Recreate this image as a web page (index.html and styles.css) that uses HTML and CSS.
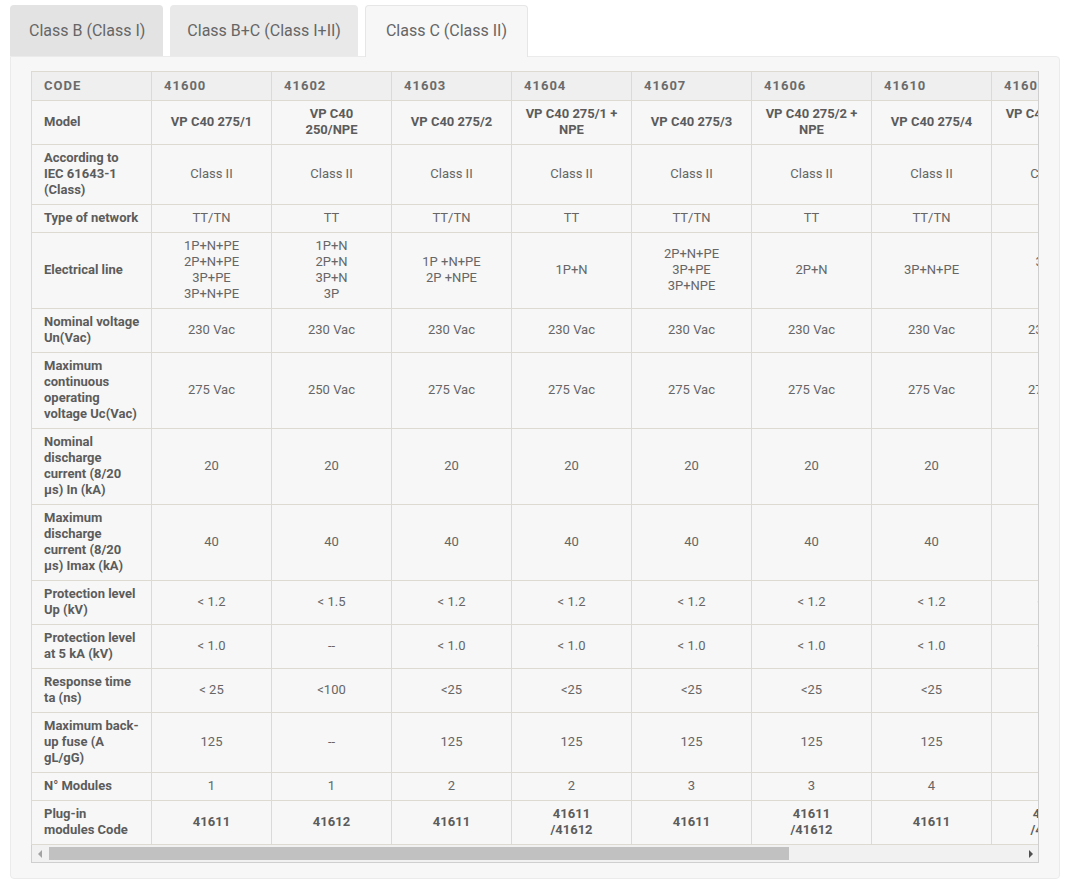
FILE: index.html
```html
<!DOCTYPE html>
<html>
<head>
<meta charset="utf-8">
<link rel="stylesheet" href="styles.css">
</head>
<body>
<div class="page">
  <div class="tabs">
    <div class="tab tab-first">Class B (Class I)</div>
    <div class="tab tab-second">Class B+C (Class I+II)</div>
    <div class="tab tab-active">Class C (Class II)</div>
  </div>
  <div class="panel">
    <div class="scroll">
      <div class="viewport">
        <table class="spec">
          <colgroup>
            <col><col><col><col><col><col><col><col><col><col><col>
          </colgroup>
          <tr class="head">
            <td>CODE</td><td>41600</td><td>41602</td><td>41603</td><td>41604</td><td>41607</td><td>41606</td><td>41610</td><td>41609</td><td>41608</td><td>41605</td>
          </tr>
          <tr class="bold">
            <th>Model</th><td>VP C40 275/1</td><td>VP C40<br>250/NPE</td><td>VP C40 275/2</td><td>VP C40 275/1 +<br>NPE</td><td>VP C40 275/3</td><td>VP C40 275/2 +<br>NPE</td><td>VP C40 275/4</td><td>VP C40 275/3 +<br>NPE</td><td>VP C40 275/4 +<br>NPE</td><td>VP C40 320/4</td>
          </tr>
          <tr>
            <th>According to<br>IEC 61643-1<br>(Class)</th><td>Class II</td><td>Class II</td><td>Class II</td><td>Class II</td><td>Class II</td><td>Class II</td><td>Class II</td><td>Class II</td><td>Class II</td><td>Class II</td>
          </tr>
          <tr>
            <th>Type of network</th><td>TT/TN</td><td>TT</td><td>TT/TN</td><td>TT</td><td>TT/TN</td><td>TT</td><td>TT/TN</td><td>TT</td><td>TT</td><td>TT/TN</td>
          </tr>
          <tr>
            <th>Electrical line</th><td>1P+N+PE<br>2P+N+PE<br>3P+PE<br>3P+N+PE</td><td>1P+N<br>2P+N<br>3P+N<br>3P</td><td>1P +N+PE<br>2P +NPE</td><td>1P+N</td><td>2P+N+PE<br>3P+PE<br>3P+NPE</td><td>2P+N</td><td>3P+N+PE</td><td>3P+N<br>3P</td><td>3P+N</td><td>3P+N+PE</td>
          </tr>
          <tr>
            <th>Nominal voltage Un(Vac)</th><td>230 Vac</td><td>230 Vac</td><td>230 Vac</td><td>230 Vac</td><td>230 Vac</td><td>230 Vac</td><td>230 Vac</td><td>230 Vac</td><td>230 Vac</td><td>230 Vac</td>
          </tr>
          <tr>
            <th>Maximum continuous operating voltage Uc(Vac)</th><td>275 Vac</td><td>250 Vac</td><td>275 Vac</td><td>275 Vac</td><td>275 Vac</td><td>275 Vac</td><td>275 Vac</td><td>275 Vac</td><td>275 Vac</td><td>320 Vac</td>
          </tr>
          <tr>
            <th>Nominal discharge current (8/20 μs) In (kA)</th><td>20</td><td>20</td><td>20</td><td>20</td><td>20</td><td>20</td><td>20</td><td>20</td><td>20</td><td>20</td>
          </tr>
          <tr>
            <th>Maximum discharge current (8/20 μs) Imax (kA)</th><td>40</td><td>40</td><td>40</td><td>40</td><td>40</td><td>40</td><td>40</td><td>40</td><td>40</td><td>40</td>
          </tr>
          <tr>
            <th>Protection level Up (kV)</th><td>&lt; 1.2</td><td>&lt; 1.5</td><td>&lt; 1.2</td><td>&lt; 1.2</td><td>&lt; 1.2</td><td>&lt; 1.2</td><td>&lt; 1.2</td><td>&lt; 1.2</td><td>&lt; 1.2</td><td>&lt; 1.4</td>
          </tr>
          <tr>
            <th>Protection level at 5 kA (kV)</th><td>&lt; 1.0</td><td>--</td><td>&lt; 1.0</td><td>&lt; 1.0</td><td>&lt; 1.0</td><td>&lt; 1.0</td><td>&lt; 1.0</td><td>&lt; 1.0</td><td>&lt; 1.0</td><td>&lt; 1.2</td>
          </tr>
          <tr>
            <th>Response time ta (ns)</th><td>&lt; 25</td><td>&lt;100</td><td>&lt;25</td><td>&lt;25</td><td>&lt;25</td><td>&lt;25</td><td>&lt;25</td><td>&lt;25</td><td>&lt;25</td><td>&lt;25</td>
          </tr>
          <tr>
            <th>Maximum back-up fuse (A gL/gG)</th><td>125</td><td>--</td><td>125</td><td>125</td><td>125</td><td>125</td><td>125</td><td>125</td><td>125</td><td>125</td>
          </tr>
          <tr>
            <th>N° Modules</th><td>1</td><td>1</td><td>2</td><td>2</td><td>3</td><td>3</td><td>4</td><td>4</td><td>4</td><td>4</td>
          </tr>
          <tr class="bold">
            <th>Plug-in<br>modules Code</th><td>41611</td><td>41612</td><td>41611</td><td>41611<br>/41612</td><td>41611</td><td>41611<br>/41612</td><td>41611</td><td>41611<br>/41612</td><td>41611<br>/41612</td><td>41613</td>
          </tr>
        </table>
      </div>
      <div class="scrollbar">
        <div class="sb-btn"><span class="tri tri-left"></span></div>
        <div class="sb-track"><div class="sb-thumb"></div></div>
        <div class="sb-btn"><span class="tri tri-right"></span></div>
      </div>
    </div>
  </div>
</div>
</body>
</html>
```

FILE: styles.css
```css
html, body {
  margin: 0;
  padding: 0;
  background: #ffffff;
}

body {
  font-family: Roboto, "Liberation Sans", Arial, sans-serif;
  color: #666666;
}

.page {
  padding: 5px 0 0 10px;
  width: 1050px;
}

.tabs {
  display: flex;
  align-items: flex-end;
  gap: 7px;
  position: relative;
  z-index: 2;
}

.tab {
  font-size: 16px;
  line-height: 20px;
  padding: 15px 18px;
  color: #666666;
  border-radius: 4px 4px 0 0;
  border: 1px solid transparent;
  border-bottom: none;
}

.tab-first {
  background: #e3e3e3;
  padding-right: 17px;
}

.tab-second {
  background: #e9e9e9;
  padding-left: 16px;
  padding-right: 16px;
}

.tab-active {
  background: #f7f7f7;
  border-color: #e6e6e6;
  margin-bottom: -1px;
  padding: 15px 20px 16px 20px;
}

.panel {
  background: #f7f7f7;
  border: 1px solid #ebebeb;
  border-radius: 0 4px 4px 4px;
  padding: 14px 20px 15px 20px;
}

.scroll {
  border: 1px solid #cfcfcf;
  border-top: none;
  border-left: none;
  background: #f7f7f7;
}

.viewport {
  overflow: hidden;
}

.spec {
  border-collapse: collapse;
  table-layout: fixed;
  width: 1320px;
  font-size: 13px;
  line-height: 16px;
}

.spec col {
  width: 120px;
}

.spec td,
.spec th {
  border: 1px solid #dcdad1;
  padding: 5px 12px 6px 12px;
  vertical-align: middle;
  text-align: center;
  font-weight: 400;
  color: #666666;
  background: #f7f7f7;
}

.spec th {
  text-align: left;
  font-weight: 700;
  color: #5c5c5c;
  padding-right: 9px;
}

.spec .bold td {
  font-weight: 700;
  color: #5c5c5c;
}

.spec .head td {
  background: #efefef;
  text-align: left;
  font-weight: 700;
  letter-spacing: 1px;
  color: #6b6b6b;
  padding-top: 6px;
  padding-bottom: 6px;
}

.scrollbar {
  display: flex;
  height: 17px;
  background: #f1f1f1;
  border-left: 1px solid #cfcfcf;
}

.sb-btn {
  width: 15px;
  display: flex;
  align-items: center;
  justify-content: center;
}

.tri {
  width: 0;
  height: 0;
  border-top: 4px solid transparent;
  border-bottom: 4px solid transparent;
}

.tri-left {
  border-right: 4px solid #a3a3a3;
}

.tri-right {
  border-left: 4px solid #505050;
}

.sb-track {
  flex: 1;
  display: flex;
  align-items: center;
  padding-left: 2px;
}

.sb-thumb {
  width: 740px;
  height: 13px;
  background: #c1c1c1;
}
```
